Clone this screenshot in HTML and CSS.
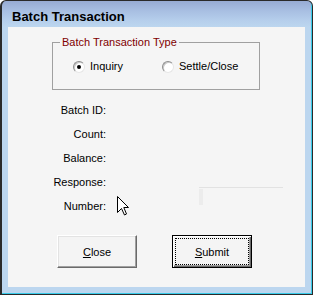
FILE: index.html
```html
<!DOCTYPE html>
<html lang="en">

<head>
  <meta charset="UTF-8">
  <title>Batch Transaction</title>
  <link rel="stylesheet" href="styles.css">
</head>

<body>
  <div class="window">
    <div class="titlebar">Batch Transaction</div>
    <div class="client">
      <fieldset class="type-group">
        <legend>Batch Transaction Type</legend>
        <div class="radio-row">
          <label class="radio checked"><span class="dot"></span>Inquiry</label>
          <label class="radio"><span class="dot"></span>Settle/Close</label>
        </div>
      </fieldset>

      <div class="info">
        <span class="key">Batch ID:</span>
        <span class="key">Count:</span>
        <span class="key">Balance:</span>
        <span class="key">Response:</span>
        <span class="key">Number:</span>
        <div class="faint"></div>
      </div>

      <div class="buttons">
        <button class="btn"><span class="focus"><u>C</u>lose</span></button>
        <button class="btn default"><span class="focus"><u>S</u>ubmit</span></button>
      </div>

      <!-- mouse pointer -->
      <svg class="cursor" width="13" height="20" viewBox="0 0 13 20">
        <path d="M0.5 0.5 V16.5 L4.5 12.5 L7.5 19 L9.5 18 L6.8 11.5 H11.5 Z" fill="#fff" stroke="#000" stroke-width="1" stroke-linejoin="miter" />
      </svg>
    </div>
  </div>
</body>

</html>
```

FILE: styles.css
```css
body {
  margin: 0;
  font-family: "Liberation Sans", Arial, sans-serif;
}

.window {
  width: 313px;
  height: 295px;
  box-sizing: border-box;
  border: 1px solid #2a2a2a;
  border-left-width: 2px;
  border-radius: 6px 6px 0 0;
  padding: 0 7px 7px 6px;
  background: linear-gradient(#97abd3 0, #a8bfe2 10px, #b6cfec 20px, #bcd6ef 26px) top / 100% 26px no-repeat, #bcd6ef;
  box-shadow: inset -1px -1px 0 #38cbe9;
}

.titlebar {
  height: 26px;
  box-sizing: border-box;
  padding: 9px 0 0 4px;
  font-size: 13px;
  line-height: 13px;
  font-weight: bold;
  color: #000;
}

.client {
  position: relative;
  width: 297px;
  height: 260px;
  box-sizing: border-box;
  padding-top: 9px;
  background-color: #f5f5f5;
  font-size: 11px;
  color: #000;
}

.type-group {
  margin: 0 0 0 44px;
  width: 208px;
  box-sizing: border-box;
  border: 1px solid #a0a0a0;
  padding: 0;
  min-width: 0;
}

.type-group legend {
  margin-left: 7px;
  padding: 0 2px;
  line-height: 13px;
  color: #800000;
}

.radio-row {
  display: flex;
  padding: 11px 0 16px 20px;
}

.radio {
  display: flex;
  align-items: center;
  width: 89px;
  line-height: 13px;
}

.dot {
  position: relative;
  width: 12px;
  height: 12px;
  box-sizing: border-box;
  margin-right: 5px;
  border: 1px solid;
  border-color: #8c8c8c #e6e6e6 #e6e6e6 #8c8c8c;
  border-radius: 50%;
  background-color: #fff;
  box-shadow: inset 1px 1px 0 #c8c8c8;
}

.radio.checked .dot::after {
  content: "";
  position: absolute;
  left: 3px;
  top: 3px;
  width: 4px;
  height: 4px;
  border-radius: 50%;
  background-color: #000;
}

.info {
  display: grid;
  grid-template-columns: 98px 1fr;
  grid-template-rows: repeat(5, 24px);
  align-items: center;
  margin-top: 8px;
}

.key {
  grid-column: 1;
  text-align: right;
}

.faint {
  grid-column: 2;
  grid-row: 4 / span 2;
  align-self: start;
  margin: 17px 0 0 93px;
  width: 84px;
  height: 18px;
  border-top: 1px solid #e2e2e2;
}

.faint::before {
  content: "";
  display: block;
  width: 4px;
  height: 16px;
  margin-top: 1px;
  background-color: #ececec;
}

.buttons {
  display: flex;
  gap: 35px;
  margin: 17px 0 0 49px;
}

.btn {
  width: 80px;
  height: 33px;
  box-sizing: border-box;
  padding: 2px;
  border: 1px solid;
  border-color: #ffffff #6a6a6a #6a6a6a #ffffff;
  box-shadow: inset -1px -1px 0 #a0a0a0, inset 1px 1px 0 #e3e3e3;
  background-color: #f4f4f4;
  font-family: "Liberation Sans", Arial, sans-serif;
  font-size: 11px;
  color: #000;
}

.btn .focus {
  display: flex;
  align-items: center;
  justify-content: center;
  height: 100%;
  box-sizing: border-box;
  border: 1px dotted transparent;
}

.btn.default {
  border: 1px solid #000;
  box-shadow: inset 1px 1px 0 #fff, inset -1px -1px 0 #6a6a6a, inset -2px -2px 0 #a0a0a0;
}

.btn.default .focus {
  border-color: #000;
}

.cursor {
  position: absolute;
  left: 109px;
  top: 169px;
}
```
